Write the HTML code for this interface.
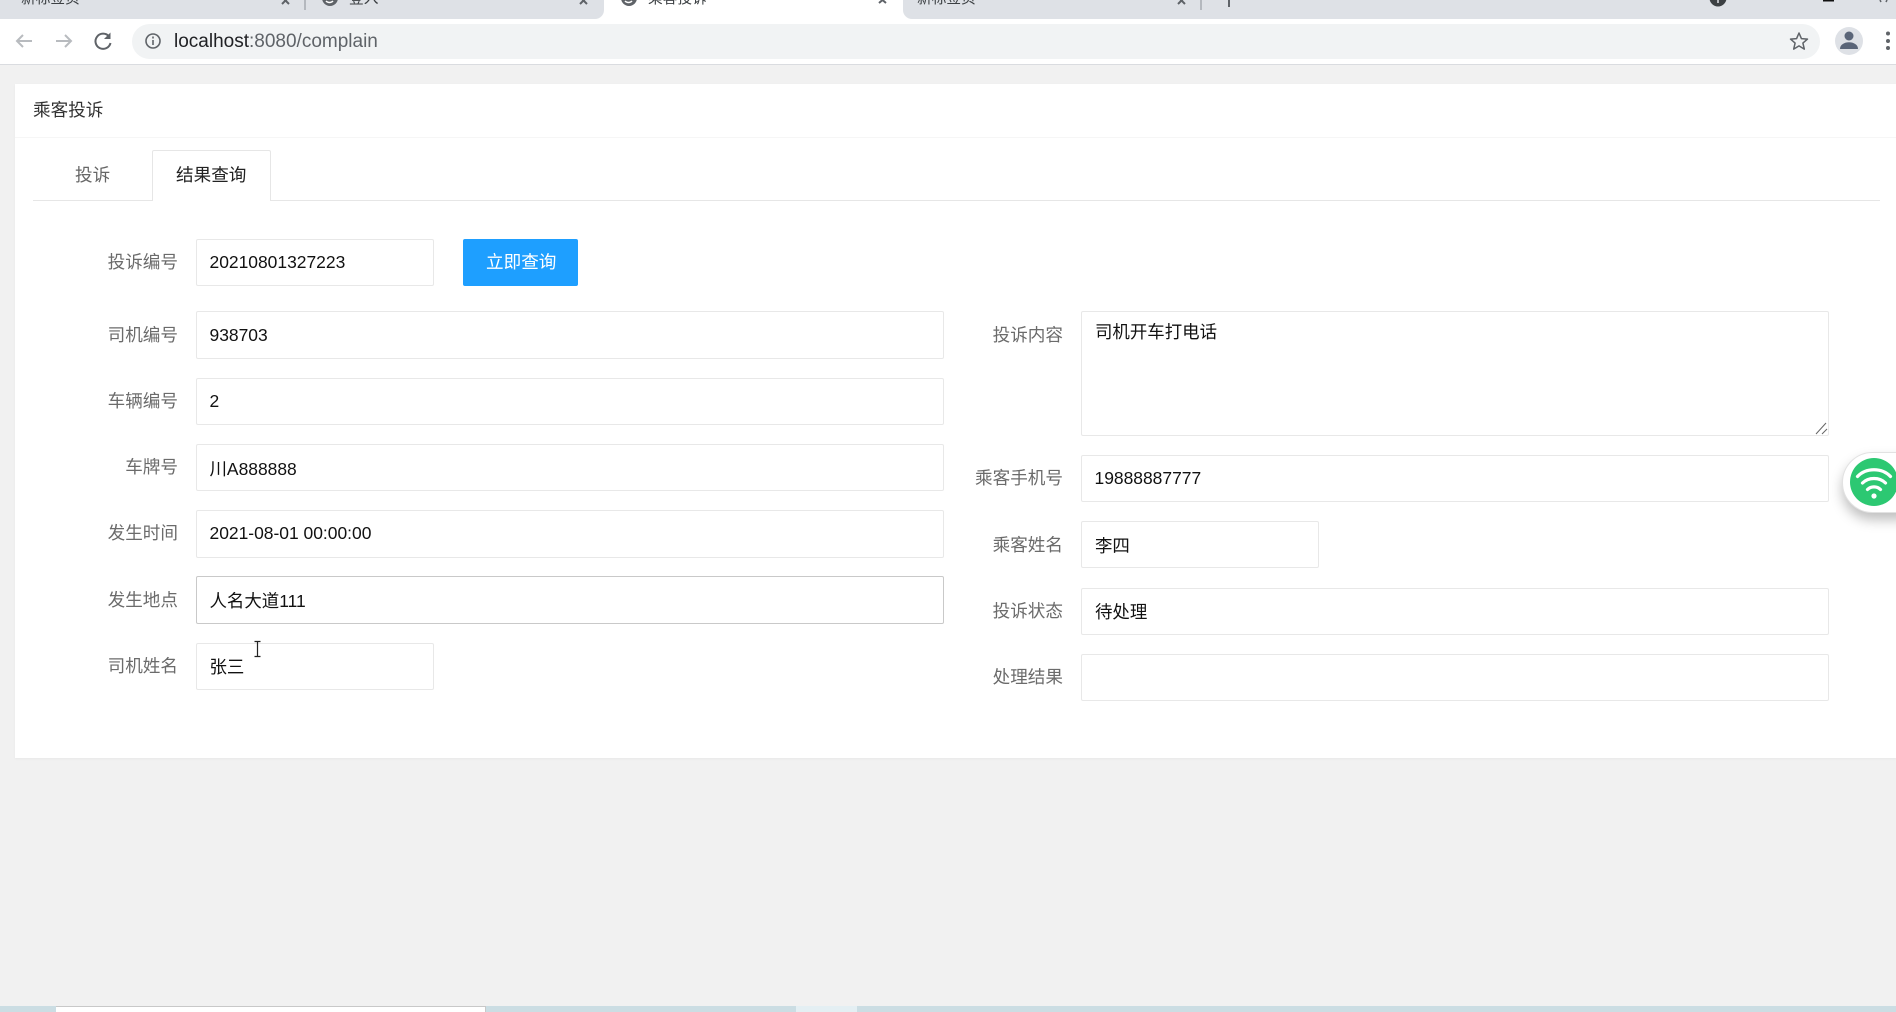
<!DOCTYPE html>
<html lang="zh"><head><meta charset="utf-8"><title>乘客投诉</title>
<style>
*{box-sizing:border-box;margin:0;padding:0}
html,body{width:1896px;height:1012px;overflow:hidden;background:#f1f1f1;font-family:"Liberation Sans","Noto Sans CJK SC",sans-serif;position:relative}
.a{position:absolute}
.t{position:absolute;height:24px;line-height:24px;font-size:17.6px;white-space:nowrap}
.l{color:#6b6b6b;text-align:right;width:120px}
.v{color:#111;font-size:17.45px}
.i{position:absolute;background:#fff;border:1px solid #e8e8e8;border-radius:2px}
</style></head><body>
<div class="a" style="left:0;top:0;width:1896px;height:19px;background:#fff"></div>
<div class="a" style="left:0;top:0;width:604px;height:19px;background:#dee1e6;border-bottom-right-radius:9px"></div>
<div class="a" style="left:903px;top:0;width:993px;height:19px;background:#dee1e6;border-bottom-left-radius:9px"></div>
<div class="t" style="left:21px;top:-13px;font-size:14.7px;color:#3c4043">新标签页</div>
<div class="t" style="left:349px;top:-13px;font-size:14.7px;color:#3c4043">登入</div>
<div class="t" style="left:648px;top:-13px;font-size:14.7px;color:#3c4043">乘客投诉</div>
<div class="t" style="left:917px;top:-13px;font-size:14.7px;color:#3c4043">新标签页</div>
<div class="a" style="left:0;top:19px;width:1896px;height:46px;background:#fff;border-bottom:1px solid #dadce0"></div>
<div class="a" style="left:132px;top:24px;width:1688px;height:35px;background:#f1f3f4;border-radius:18px"></div>
<div class="t" style="left:174px;top:30px;font-size:19px;color:#5f6368"><span style="color:#202124">localhost</span>:8080/complain</div>
<svg class="a" style="left:0;top:0" width="1896" height="70" fill="none">
<g stroke="#5f6368" stroke-width="2"><path d="M282 -3l7 7M289 -3l-7 7M580 -3l7 7M587 -3l-7 7M879 -3l7 6M886 -3l-7 6M1178 -3l7 7M1185 -3l-7 7"/></g>
<path d="M305 0v10M1201 0v10" stroke="#8a9096" stroke-width="1"/>
<path d="M1229 0v7" stroke="#5f6368" stroke-width="2"/>
<circle cx="330" cy="-2" r="8" fill="#5f6368"/><circle cx="629" cy="-2" r="8" fill="#5f6368"/>
<path d="M326 1c2 2 5 2 7 0M625 1c2 2 5 2 7 0" stroke="#fff" stroke-width="1.500"/>
<circle cx="1718" cy="-2" r="8.500" fill="#3c4043"/><path d="M1718 0v3" stroke="#dee1e6" stroke-width="1.500"/>
<path d="M1823 .5h11" stroke="#111" stroke-width="2"/>
<path d="M1880 0l1 2M1887 0l-1 2" stroke="#5f6368" stroke-width="1.500"/>
<path d="M32 41H17M23 35l-6 6 6 6" stroke="#b8bbbf" stroke-width="2"/>
<path d="M56 41h15M65 35l6 6-6 6" stroke="#b8bbbf" stroke-width="2"/>
<path d="M109 36.500A7.600 7.600 0 1 0 110.500 43" stroke="#5f6368" stroke-width="2"/><path d="M110.500 32.500v6.500h-6.500z" fill="#5f6368"/>
<circle cx="153" cy="41" r="7" stroke="#5f6368" stroke-width="1.600"/><path d="M153 40v5M153 36.500v2" stroke="#5f6368" stroke-width="1.600"/>
<path d="M1799 33l2.400 5.600 6.100.5-4.600 4 1.400 6-5.300-3.200-5.300 3.200 1.400-6-4.600-4 6.100-.5z" stroke="#5f6368" stroke-width="1.500" stroke-linejoin="round"/>
<circle cx="1849" cy="41" r="14" fill="#dee1e6"/><circle cx="1849" cy="36" r="4.500" fill="#5a6578"/><path d="M1840 49c0-9 18-9 18 0z" fill="#5a6578"/>
<g fill="#5f6368"><circle cx="1888" cy="33.500" r="2"/><circle cx="1888" cy="41" r="2"/><circle cx="1888" cy="48" r="2"/></g>
</svg>

<div class="a" style="left:15px;top:84px;width:1881px;height:674px;background:#fff;box-shadow:0 1px 2px rgba(0,0,0,.04)"></div>
<div class="a" style="left:15px;top:137px;width:1881px;height:1px;background:#f6f6f6"></div>
<div class="t" style="left:33px;top:98px;color:#333">乘客投诉</div>
<div class="a" style="left:33px;top:200px;width:1847px;height:1px;background:#e6e6e6"></div>
<div class="a" style="left:152px;top:150px;width:119px;height:51px;background:#fff;border:1px solid #e6e6e6;border-bottom:0;border-radius:2px 2px 0 0"></div>
<div class="t" style="left:75px;top:163px;color:#666">投诉</div>
<div class="t" style="left:176px;top:163px;color:#222">结果查询</div>

<div class="i" style="left:196px;top:239px;width:238px;height:47px"></div>
<div class="a" style="left:463px;top:239px;width:115px;height:47px;background:#1e9fff;border-radius:2px"></div>
<div class="t" style="left:486px;top:250px;color:#fff">立即查询</div>
<div class="i" style="left:196px;top:311px;width:748px;height:48px"></div>
<div class="i" style="left:196px;top:378px;width:748px;height:47px"></div>
<div class="i" style="left:196px;top:444px;width:748px;height:47px"></div>
<div class="i" style="left:196px;top:510px;width:748px;height:48px"></div>
<div class="i" style="left:196px;top:576px;width:748px;height:48px;border-color:#c9c9c9"></div>
<div class="i" style="left:196px;top:643px;width:238px;height:47px"></div>
<div class="i" style="left:1081px;top:311px;width:748px;height:125px"></div>
<div class="i" style="left:1081px;top:455px;width:748px;height:47px"></div>
<div class="i" style="left:1081px;top:521px;width:238px;height:47px"></div>
<div class="i" style="left:1081px;top:588px;width:748px;height:47px"></div>
<div class="i" style="left:1081px;top:654px;width:748px;height:47px"></div>

<div class="t l" style="left:58px;top:250px">投诉编号</div><div class="t v" style="left:209.500px;top:250px">20210801327223</div>
<div class="t l" style="left:58px;top:323px">司机编号</div><div class="t v" style="left:209.500px;top:323px">938703</div>
<div class="t l" style="left:58px;top:389px">车辆编号</div><div class="t v" style="left:209.500px;top:389px">2</div>
<div class="t l" style="left:58px;top:455px">车牌号</div><div class="t v" style="left:209.500px;top:457px">川A888888</div>
<div class="t l" style="left:58px;top:521px">发生时间</div><div class="t v" style="left:209.500px;top:521px">2021-08-01 00:00:00</div>
<div class="t l" style="left:58px;top:588px">发生地点</div><div class="t v" style="left:209.500px;top:589px">人名大道111</div>
<div class="t l" style="left:58px;top:654px">司机姓名</div><div class="t v" style="left:209.500px;top:655px">张三</div>

<div class="t l" style="left:943px;top:323px">投诉内容</div><div class="t v" style="left:1095px;top:320px">司机开车打电话</div>
<div class="t l" style="left:943px;top:466px">乘客手机号</div><div class="t v" style="left:1094.500px;top:466px">19888887777</div>
<div class="t l" style="left:943px;top:533px">乘客姓名</div><div class="t v" style="left:1095px;top:534px">李四</div>
<div class="t l" style="left:943px;top:599px">投诉状态</div><div class="t v" style="left:1095px;top:600px">待处理</div>
<div class="t l" style="left:943px;top:665px">处理结果</div>

<svg class="a" style="left:0;top:0" width="1896" height="1012" fill="none">
<path d="M1826 423l-10 11M1827 429l-5 5" stroke="#666" stroke-width="1"/>
<path d="M254.500 641.500h6M254.500 656.500h6M257.500 641.500v15" stroke="#222" stroke-width="1.200"/>
</svg>

<div class="a" style="left:1842px;top:452px;width:90px;height:61px;background:#fff;border:1px solid #e2e2e2;border-radius:31px;box-shadow:0 7px 12px rgba(0,0,0,.25)"></div>
<svg class="a" style="left:1850px;top:458px" width="46" height="48" fill="none">
<circle cx="24" cy="24" r="24" fill="#2cc872"/>
<path d="M7.500 18.500C16 9.500 32 9.500 40.500 18.500M12.500 25C18.500 19 29.500 19 35.500 25M17.500 31.500c3.500-3.500 9.500-3.500 13 0" stroke="#fff" stroke-width="3.200" stroke-linecap="round"/>
<circle cx="24" cy="38" r="2.600" fill="#fff"/>
</svg>

<div class="a" style="left:0;top:1006px;width:1896px;height:6px;background:#cbdde3"></div>
<div class="a" style="left:56px;top:1006px;width:430px;height:6px;background:#fff;border-top:1px solid #c8c8c8;border-right:1px solid #c8c8c8"></div>
<div class="a" style="left:796px;top:1006px;width:61px;height:6px;background:#e4eff3"></div>
</body></html>
